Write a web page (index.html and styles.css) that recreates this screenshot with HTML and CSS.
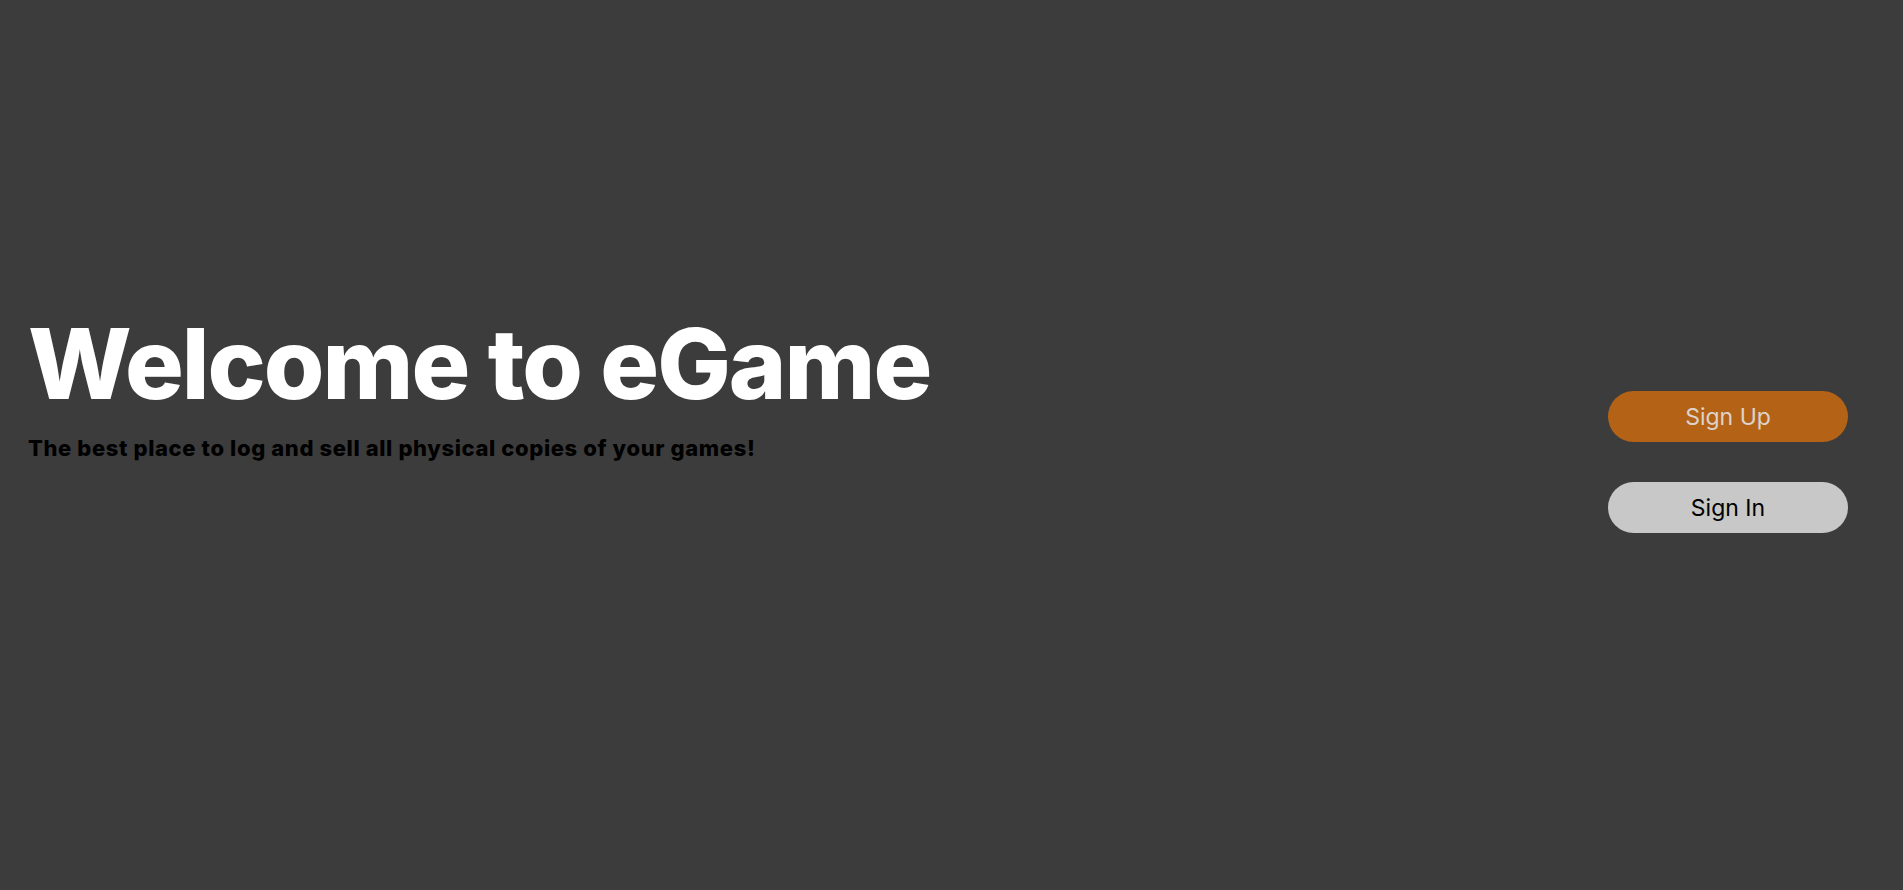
FILE: index.html
```html
<!DOCTYPE html>
<html lang="en">
<head>
<meta charset="utf-8">
<title>eGame</title>
<link rel="stylesheet" href="styles.css">
</head>
<body>
<main class="hero">
  <section class="intro">
    <h1 class="title">Welcome to eGame</h1>
    <p class="tagline">The best place to log and sell all physical copies of your games!</p>
  </section>
  <nav class="actions">
    <a class="btn btn-signup" href="#">Sign Up</a>
    <a class="btn btn-signin" href="#">Sign In</a>
  </nav>
</main>
</body>
</html>
```
FILE: styles.css
```css
html, body {
  margin: 0;
  padding: 0;
  background: #3c3c3c;
  height: 100%;
}
body {
  font-family: "Inter", "Liberation Sans", sans-serif;
}
.hero {
  height: 100vh;
  display: flex;
  justify-content: space-between;
  align-items: center;
  padding: 0 55px 0 28px;
  box-sizing: border-box;
}
.intro {
  display: flex;
  flex-direction: column;
  margin-bottom: 114px;
}
.title {
  margin: 0;
  font-size: 98px;
  font-weight: 800;
  line-height: 1;
  color: #ffffff;
  letter-spacing: -2px;
}
.tagline {
  margin: 22px 0 0;
  font-size: 22px;
  font-weight: 800;
  color: #000000;
  letter-spacing: 0.62px;
}
.actions {
  display: flex;
  flex-direction: column;
  gap: 40px;
  margin-top: 34px;
}
.btn {
  display: flex;
  align-items: center;
  justify-content: center;
  width: 240px;
  height: 51px;
  border-radius: 26px;
  font-size: 23px;
  font-weight: 400;
  text-decoration: none;
}
.btn-signup {
  background: #b46316;
  color: #dcd3cc;
}
.btn-signin {
  background: #c8c8c8;
  color: #000000;
}
```
